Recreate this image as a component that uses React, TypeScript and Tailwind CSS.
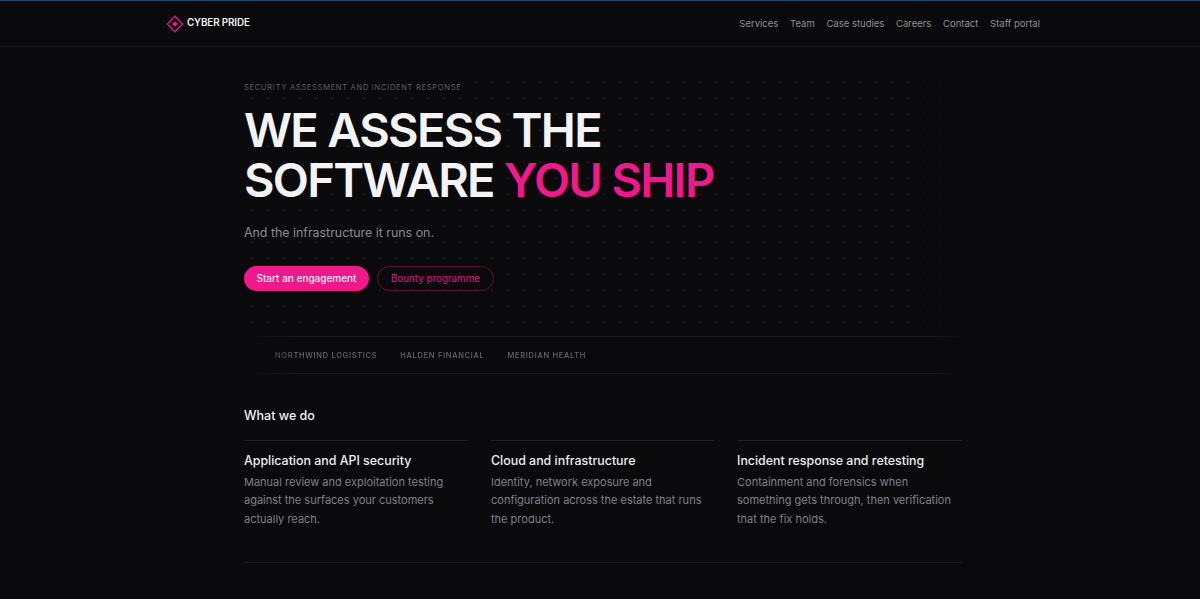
const navLinks = ['Services', 'Team', 'Case studies', 'Careers', 'Contact', 'Staff portal'];

const clients = ['Northwind Logistics', 'Halden Financial', 'Meridian Health'];

const services = [
  {
    title: 'Application and API security',
    lines: ['Manual review and exploitation testing', 'against the surfaces your customers', 'actually reach.'],
  },
  {
    title: 'Cloud and infrastructure',
    lines: ['Identity, network exposure and', 'configuration across the estate that runs', 'the product.'],
  },
  {
    title: 'Incident response and retesting',
    lines: ['Containment and forensics when', 'something gets through, then verification', 'that the fix holds.'],
  },
];

function Logo() {
  return (
    <svg width="18" height="18" viewBox="0 0 18 18" fill="none" className="shrink-0">
      <rect x="3.5" y="3.5" width="11" height="11" transform="rotate(45 9 9)" stroke="#d8187c" strokeWidth="1.3" />
      <rect x="7" y="7" width="4" height="4" transform="rotate(45 9 9)" fill="#f0188a" />
    </svg>
  );
}

export default function App() {
  return (
    <div className="h-[599px] overflow-hidden bg-[#0a0a0d] pl-[6px] font-['Inter',sans-serif] antialiased">
      <header className="-ml-[6px] border-t border-b border-t-[#1d4a73] border-b-[#1a1a1d] pl-[6px]">
        <div className="mx-auto flex h-[45px] w-[874px] items-center justify-between">
          <div className="flex items-center gap-[3px]">
            <Logo />
            <span className="text-[9.8px] font-semibold tracking-[-0.1px] text-[#f1f1f3]">CYBER PRIDE</span>
          </div>
          <nav className="flex gap-[11.7px] pt-[1px] text-[9.5px] text-[#8f8f96]">
            {navLinks.map((link) => (
              <a key={link}>{link}</a>
            ))}
          </nav>
        </div>
      </header>

      <main className="mx-auto w-[718px]">
        <section className="relative">
          <div className="absolute inset-x-0 top-[27px] h-[262px] bg-[radial-gradient(#151518_1px,transparent_1px)] bg-[size:16px_16px] [mask-image:linear-gradient(to_right,black_92%,transparent_100%)]" />
          <div className="relative pt-[36px]">
            <p className="text-[7.5px] leading-[10px] tracking-[0.72px] text-[#5d5d64] uppercase">
              Security assessment and incident response
            </p>
            <h1 className="mt-[12px] text-[47px] leading-[50px] font-semibold tracking-[-1.7px] text-[#f4f4f6]">
              WE ASSESS THE
              <br />
              SOFTWARE <span className="text-[#f0188a]">YOU SHIP</span>
            </h1>
            <p className="mt-[18px] text-[12.4px] leading-[20px] text-[#8a8a91]">And the infrastructure it runs on.</p>
            <div className="mt-[23px] flex gap-[8px]">
              <a className="flex h-[25px] w-[125px] items-center justify-center rounded-full bg-[#f0188a] text-[10px] font-medium text-[#fdf0f7]">
                Start an engagement
              </a>
              <a className="flex h-[25px] w-[117px] items-center justify-center rounded-full border border-[#5a1239] pt-[1px] text-[9.7px] font-medium text-[#c81674]">
                Bounty programme
              </a>
            </div>
          </div>
          <div className="relative mt-[45px] flex h-[38px] items-center gap-[23px] border-y border-[#1a1a1d] pt-[1px] pl-[31px] [mask-image:linear-gradient(to_right,transparent_0%,black_7%,black_96%,transparent_100%)]">
            {clients.map((client) => (
              <span key={client} className="text-[7.5px] font-medium tracking-[0.7px] text-[#66666d] uppercase">
                {client}
              </span>
            ))}
          </div>
        </section>

        <section className="border-b border-[#1a1a1d] pt-[33px] pb-[34px]">
          <h2 className="text-[12.5px] leading-[18px] font-medium text-[#f1f1f3]">What we do</h2>
          <div className="mt-[15px] grid grid-cols-[224px_223px_225px] gap-[23px]">
            {services.map((service) => (
              <div key={service.title} className="border-t border-[#222225] pt-[11px]">
                <h3 className="text-[12.4px] leading-[18px] font-medium text-[#ededf0]">{service.title}</h3>
                <p className="mt-[3px] text-[11px] leading-[18.3px] text-[#808086]">
                  {service.lines.map((line) => (
                    <span key={line} className="block">
                      {line}
                    </span>
                  ))}
                </p>
              </div>
            ))}
          </div>
        </section>
      </main>
    </div>
  );
}
